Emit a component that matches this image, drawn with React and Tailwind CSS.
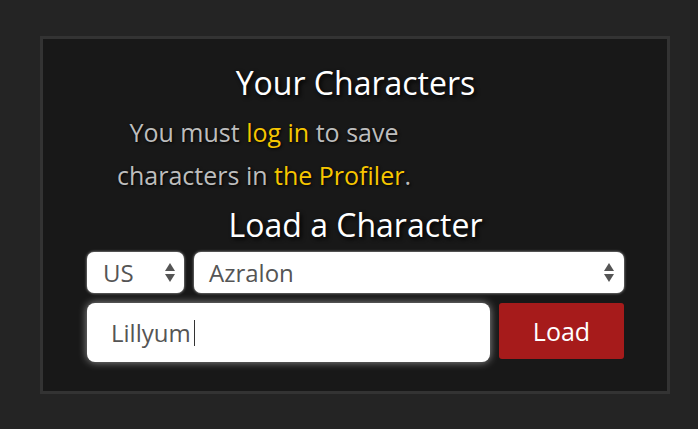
import React from "react";

function Arrows() {
  return (
    <svg width="10" height="19" viewBox="0 0 10 19" className="shrink-0">
      <polygon points="5,0 10,8 0,8" fill="#555" />
      <polygon points="0,11 10,11 5,19" fill="#555" />
    </svg>
  );
}

export default function App() {
  return (
    <div className="w-[698px] h-[429px] bg-[#242424] pt-[36px] pl-[40px] font-['Open_Sans',sans-serif]">
      <div className="w-[630px] h-[358px] border-[3px] border-[#333333] bg-[#181818] pt-[28px] pl-[44px] pr-[43px]">
        <h1 className="h-[32px] leading-[32px] text-[32px] text-white text-center [text-shadow:2px_2px_4px_#000]">
          Your Characters
        </h1>
        <p className="mt-[12px] ml-[27px] w-[300px] text-center text-[25px] leading-[43px] text-[#bdbdbd] whitespace-nowrap [text-shadow:1px_1px_3px_#000]">
          You must <span className="text-[#f7c600]">log in</span> to save
          <br />
          characters in <span className="text-[#f7c600]">the Profiler</span>.
        </p>
        <h2 className="mt-[12px] h-[32px] leading-[32px] text-[32px] text-white text-center [text-shadow:2px_2px_4px_#000]">
          Load a Character
        </h2>
        <div className="mt-[11px] flex gap-[10px]">
          <div className="w-[97px] h-[41px] bg-white rounded-[7px] shadow-[0_0_3px_rgba(255,255,255,0.7)] flex items-center justify-between pl-[16px] pr-[9px]">
            <span className="text-[24px] text-[#555] leading-none">US</span>
            <Arrows />
          </div>
          <div className="flex-1 h-[41px] bg-white rounded-[7px] shadow-[0_0_3px_rgba(255,255,255,0.7)] flex items-center justify-between pl-[15px] pr-[10px]">
            <span className="text-[24px] text-[#555] leading-none">Azralon</span>
            <Arrows />
          </div>
        </div>
        <div className="mt-[10px] flex gap-[9px] items-start">
          <div className="w-[403px] h-[59px] bg-white rounded-[8px] shadow-[0_0_8px_rgba(255,255,255,0.55)] flex items-center pl-[24px]">
            <span className="text-[24px] text-[#555] leading-none">Lillyum</span>
            <span className="w-px h-[26px] bg-[#333] ml-[3px]" />
          </div>
          <button className="flex-1 h-[56px] bg-[#a61b1b] rounded-[3px] text-white text-[25px] leading-none flex items-center justify-center">
            Load
          </button>
        </div>
      </div>
    </div>
  );
}
